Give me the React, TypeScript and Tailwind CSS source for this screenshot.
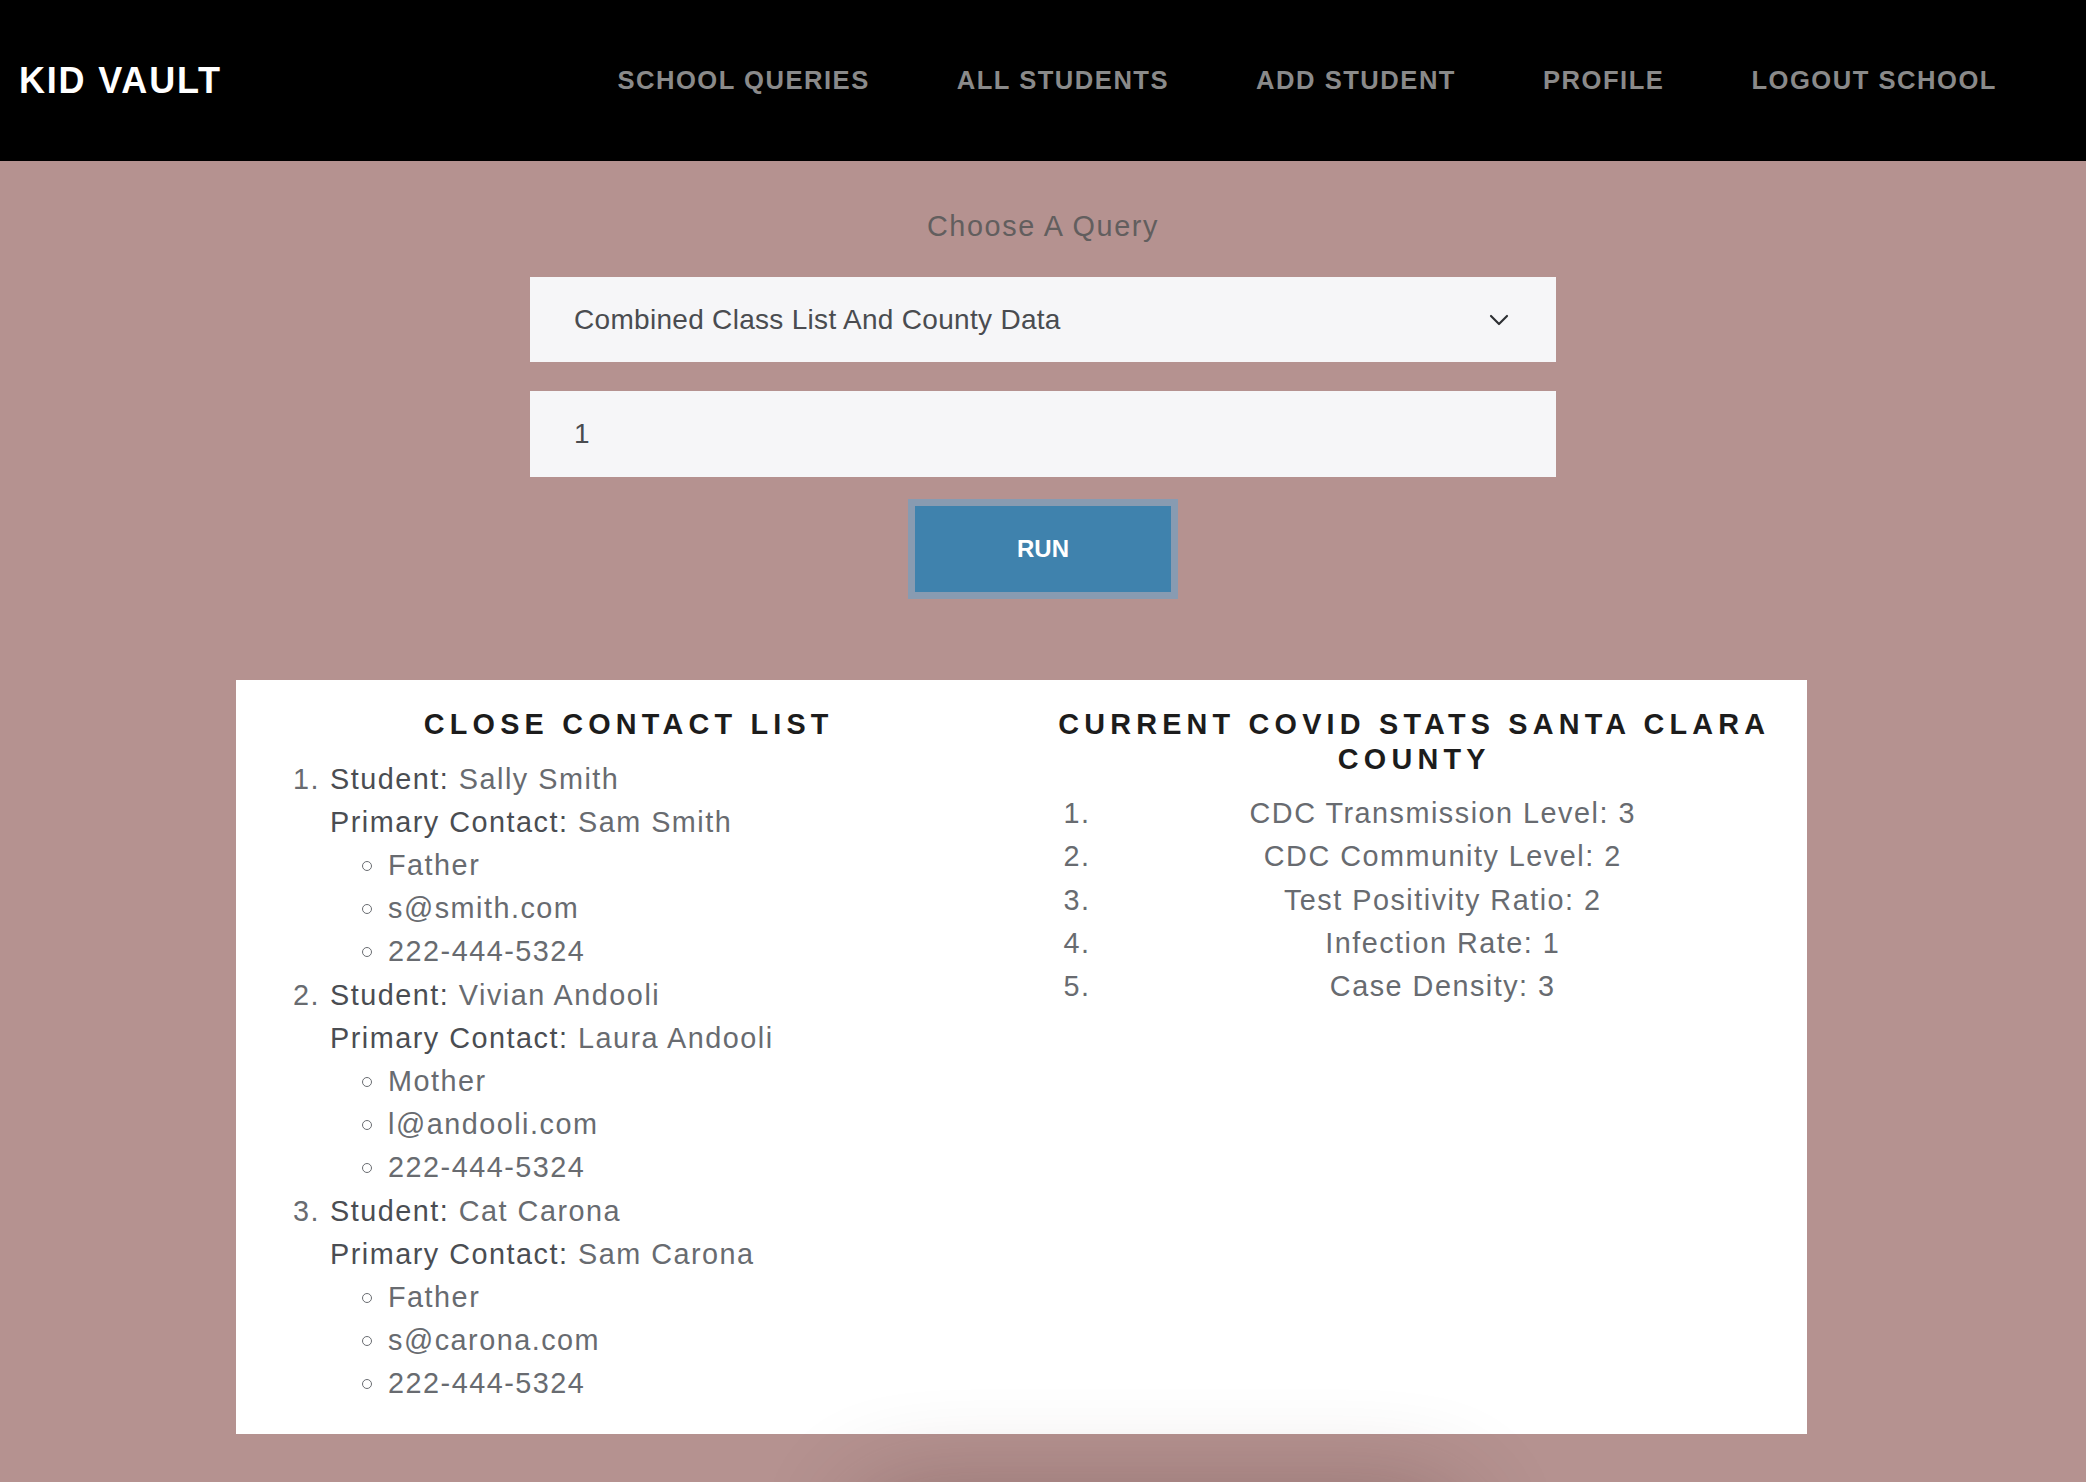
import { ChevronDown } from "lucide-react";

const students = [
  { name: "Sally Smith", contact: "Sam Smith", details: ["Father", "s@smith.com", "222-444-5324"] },
  { name: "Vivian Andooli", contact: "Laura Andooli", details: ["Mother", "l@andooli.com", "222-444-5324"] },
  { name: "Cat Carona", contact: "Sam Carona", details: ["Father", "s@carona.com", "222-444-5324"] },
];

const stats = [
  "CDC Transmission Level: 3",
  "CDC Community Level: 2",
  "Test Positivity Ratio: 2",
  "Infection Rate: 1",
  "Case Density: 3",
];

const navLinks = ["SCHOOL QUERIES", "ALL STUDENTS", "ADD STUDENT", "PROFILE", "LOGOUT SCHOOL"];

function Header() {
  return (
    <header className="flex h-[161px] items-center justify-between bg-black pl-[19px] pr-[89px]">
      <div className="text-[36px] font-bold tracking-[1.8px] text-white">KID VAULT</div>
      <nav className="flex items-center gap-[87px]">
        {navLinks.map((link) => (
          <a key={link} className="text-[25.6px] font-bold tracking-[1.5px] text-[#8a8a8a]">
            {link}
          </a>
        ))}
      </nav>
    </header>
  );
}

function QueryForm() {
  return (
    <section className="flex flex-col items-center pt-[44px]">
      <h2 className="text-[28.8px] leading-[1.5] tracking-[1.6px] text-[#625e5e]">Choose A Query</h2>
      <div className="mt-[29px] flex h-[85px] w-[1026px] items-center justify-between bg-[#f6f6f8] pl-[44px] pr-[41px]">
        <span className="text-[28px] tracking-[0.3px] text-[#4a4c50]">Combined Class List And County Data</span>
        <ChevronDown size={32} strokeWidth={1.6} className="text-[#2e3033]" />
      </div>
      <div className="mt-[29px] flex h-[86px] w-[1026px] items-center bg-[#f6f6f8] pl-[44px]">
        <span className="text-[28px] text-[#4a4c50]">1</span>
      </div>
      <button className="mt-[22px] flex h-[100px] w-[270px] items-center justify-center border-[7px] border-[#889bb1] bg-[#3f82ad] text-[24px] font-bold text-white">
        RUN
      </button>
    </section>
  );
}

function ContactList() {
  return (
    <div className="px-[30px]">
      <h3 className="mb-[16px] text-center text-[28.8px] font-bold leading-[1.2] tracking-[5.2px] text-[#1c1c1c]">
        CLOSE CONTACT LIST
      </h3>
      <div className="text-[28.8px] leading-[1.5] tracking-[1.5px] text-[#686b70]">
        {students.map((s, i) => (
          <div key={s.name}>
            <div className="flex">
              <span className="w-[64px] pl-[27px]">{i + 1}.</span>
              <span>
                <span className="text-[#4a4d52]">Student:</span> {s.name}
              </span>
            </div>
            <div className="pl-[64px]">
              <span className="text-[#4a4d52]">Primary Contact:</span> {s.contact}
            </div>
            {s.details.map((d, j) => (
              <div key={j} className="flex items-center pl-[96px]">
                <span className="h-[10px] w-[10px] rounded-full border border-[#6a6d72]" />
                <span className="ml-[16px]">{d}</span>
              </div>
            ))}
          </div>
        ))}
      </div>
    </div>
  );
}

function CovidStats() {
  return (
    <div className="px-[30px]">
      <h3 className="mb-[16px] text-center text-[28.8px] font-bold leading-[1.2] tracking-[5.2px] text-[#1c1c1c]">
        CURRENT COVID STATS SANTA CLARA COUNTY
      </h3>
      <div className="text-[28.8px] leading-[1.5] tracking-[1.5px] text-[#686b70]">
        {stats.map((stat, i) => (
          <div key={stat} className="flex">
            <span className="w-[57px] pl-[12px]">{i + 1}.</span>
            <span className="flex-1 text-center">{stat}</span>
          </div>
        ))}
      </div>
    </div>
  );
}

export default function App() {
  return (
    <div className="min-h-[1482px] overflow-hidden bg-[#b59290] font-['Liberation_Sans',Arial,sans-serif]">
      <Header />
      <QueryForm />
      <div className="ml-[236px] mt-[81px] grid w-[1571px] grid-cols-2 bg-white pb-[28px] pt-[27px]">
        <ContactList />
        <CovidStats />
      </div>
      <div className="ml-[860px] mt-[60px] h-[200px] w-[600px] rounded-[40px] bg-[#b59290] shadow-[0_0_100px_rgba(60,30,30,0.3)]" />
    </div>
  );
}
